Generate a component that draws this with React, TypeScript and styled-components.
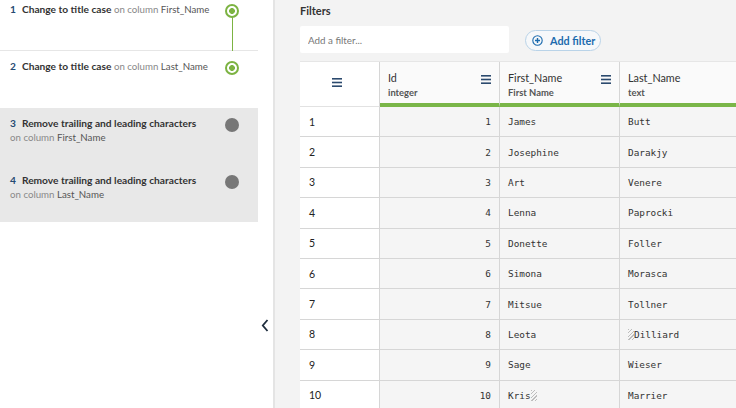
import React from "react";
import styled, { createGlobalStyle, css } from "styled-components";

const GlobalStyle = createGlobalStyle`
  html, body { margin: 0; padding: 0; }
  body { font-family: "Lato", "Noto Sans", sans-serif; color: #333; }
`;

const Page = styled.div`
  display: flex;
  width: 736px;
  height: 408px;
  overflow: hidden;
  background: #f3f3f3;
`;

const LeftPanel = styled.aside`
  position: relative;
  width: 273px;
  flex: none;
  background: #fff;
  border-right: 2px solid #e4e4e4;
`;

const StepList = styled.ol`
  list-style: none;
  margin: -6px 0 0;
  padding: 0;
  width: 258px;
`;

const Step = styled.li<{ $muted?: boolean; $divider?: boolean; $link?: boolean }>`
  position: relative;
  display: flex;
  align-items: flex-start;
  box-sizing: border-box;
  height: 57px;
  padding: 9px 19px 0 10px;
  background: ${(p) => (p.$muted ? "#e8e8e8" : "#fff")};
  border-bottom: ${(p) => (p.$divider ? "1px solid #e6e6e6" : "none")};
  ${(p) =>
    p.$link &&
    css`
      &::after {
        content: "";
        position: absolute;
        left: 231.5px;
        top: 20px;
        width: 1.5px;
        height: 52px;
        background: #7cb342;
      }
    `}
`;

const StepText = styled.div`
  flex: 1;
  min-width: 0;
  font-size: 9.7px;
  line-height: 13px;
`;

const StepHead = styled.div`
  display: flex;
  align-items: baseline;
  gap: 6px;
  white-space: nowrap;
`;

const StepNum = styled.span`
  font-size: 10.2px;
  font-weight: 700;
  color: #264a73;
`;

const StepTitle = styled.span`
  font-size: 10.2px;
  font-weight: 700;
  color: #333;
`;

const OnCol = styled.span`
  font-weight: 400;
  color: #888;
`;

const ColName = styled.span`
  font-weight: 400;
  color: #555;
`;

const StepSub = styled.div`
  margin-top: 1px;
  white-space: nowrap;
`;

const Dot = styled.span<{ $done?: boolean }>`
  position: relative;
  z-index: 1;
  flex: none;
  margin-top: 1px;
  width: 14px;
  height: 14px;
  box-sizing: border-box;
  border-radius: 50%;
  ${(p) =>
    p.$done
      ? css`
          border: 2px solid #7cb342;
          background: radial-gradient(circle, #7cb342 0 2.6px, #fff 3.2px);
        `
      : css`
          background: #777;
        `}
`;

const Collapse = styled.button`
  position: absolute;
  left: 259px;
  top: 317px;
  width: 12px;
  height: 16px;
  padding: 0;
  border: none;
  background: transparent;
  display: flex;
  align-items: center;
  justify-content: center;
`;

const RightPanel = styled.main`
  flex: 1;
  min-width: 0;
  padding: 4px 0 0 25px;
`;

const FiltersLabel = styled.div`
  font-size: 11px;
  font-weight: 700;
  line-height: 14px;
  color: #333;
`;

const FilterBar = styled.div`
  display: flex;
  align-items: center;
  gap: 16px;
  margin-top: 8px;
`;

const FilterInput = styled.input`
  box-sizing: border-box;
  width: 209px;
  height: 27px;
  border: none;
  border-radius: 2px;
  background: #fff;
  padding: 0 8px;
  font-family: "Lato", "Noto Sans", sans-serif;
  font-size: 9.8px;
  color: #333;
  outline: none;
  &::placeholder { color: #777; }
`;

const AddButton = styled.button`
  display: flex;
  align-items: center;
  gap: 7px;
  box-sizing: border-box;
  width: 76px;
  height: 21px;
  padding: 0 0 0 6px;
  border: 1px solid #b9d3e8;
  border-radius: 11px;
  background: #f6f8fa;
  color: #1c6bae;
  font-family: "Lato", "Noto Sans", sans-serif;
  font-size: 10.8px;
  font-weight: 700;
  white-space: nowrap;
  margin-top: 1px;
`;

const Table = styled.div`
  display: grid;
  grid-template-columns: 80px 120px 120px 140px;
  grid-auto-rows: 30.4px;
  grid-template-rows: 45px;
  margin-top: 8px;
  border-top: 1px solid #e6e6e6;
`;

const HeadCorner = styled.div`
  background: #fff;
  border-right: 1px solid #d6d6d6;
  border-bottom: 1px solid #e2e2e2;
  display: flex;
  align-items: center;
  justify-content: center;
  padding: 0 6px 3px 0;
  box-sizing: border-box;
`;

const HeadCell = styled.div`
  box-sizing: border-box;
  background: #fafafa;
  border-right: 1px solid #d6d6d6;
  border-bottom: 4px solid #7ab648;
  padding: 8px 8px 0;
  display: flex;
  justify-content: space-between;
  align-items: flex-start;
`;

const HeadText = styled.div`
  display: flex;
  flex-direction: column;
`;

const HeadName = styled.span`
  font-size: 10.8px;
  line-height: 16px;
  color: #333;
`;

const HeadType = styled.span`
  font-size: 9.4px;
  font-weight: 700;
  line-height: 14px;
  color: #555;
`;

const MenuIcon = styled.span`
  display: flex;
  margin-top: 5px;
`;

const Cell = styled.div<{ $kind: "index" | "num" | "text" }>`
  box-sizing: border-box;
  display: flex;
  align-items: center;
  border-right: 1px solid #d6d6d6;
  border-bottom: 1px solid #d6d6d6;
  white-space: nowrap;
  ${(p) =>
    p.$kind === "index"
      ? css`
          background: #fff;
          padding-left: 9px;
          font-size: 10.5px;
          color: #222;
        `
      : css`
          background: #f5f5f5;
          font-family: "DejaVu Sans Mono", "Liberation Mono", monospace;
          font-size: 9.4px;
          color: #333;
          padding: 0 8px;
          justify-content: ${p.$kind === "num" ? "flex-end" : "flex-start"};
        `}
`;

const Space = styled.span`
  display: inline-block;
  width: 6px;
  height: 11px;
  background: repeating-linear-gradient(135deg, #bdbdbd 0 1px, transparent 1px 2.5px);
`;

const Hamburger = () => (
  <svg width="10" height="9" viewBox="0 0 10 9">
    <rect x="0" y="0" width="10" height="1.6" fill="#2b4a6e" />
    <rect x="0" y="3.7" width="10" height="1.6" fill="#2b4a6e" />
    <rect x="0" y="7.4" width="10" height="1.6" fill="#2b4a6e" />
  </svg>
);

const PlusCircle = () => (
  <svg width="11" height="11" viewBox="0 0 11 11">
    <circle cx="5.5" cy="5.5" r="4.7" fill="none" stroke="#1c6bae" strokeWidth="1.1" />
    <path d="M5.5 3v5M3 5.5h5" stroke="#1c6bae" strokeWidth="1.4" />
  </svg>
);

const Chevron = () => (
  <svg width="8" height="13" viewBox="0 0 8 13">
    <path d="M6.5 1L1.8 6.5L6.5 12" fill="none" stroke="#1e2d3d" strokeWidth="1.8" />
  </svg>
);

type Row = { id: number; first: string; last: string; firstTrail?: boolean; lastLead?: boolean };

const rows: Row[] = [
  { id: 1, first: "James", last: "Butt" },
  { id: 2, first: "Josephine", last: "Darakjy" },
  { id: 3, first: "Art", last: "Venere" },
  { id: 4, first: "Lenna", last: "Paprocki" },
  { id: 5, first: "Donette", last: "Foller" },
  { id: 6, first: "Simona", last: "Morasca" },
  { id: 7, first: "Mitsue", last: "Tollner" },
  { id: 8, first: "Leota", last: "Dilliard", lastLead: true },
  { id: 9, first: "Sage", last: "Wieser" },
  { id: 10, first: "Kris", last: "Marrier", firstTrail: true },
];

const columns = [
  { name: "Id", type: "integer" },
  { name: "First_Name", type: "First Name" },
  { name: "Last_Name", type: "text" },
];

type StepData = { n: number; title: string; col: string; done: boolean };

const steps: StepData[] = [
  { n: 1, title: "Change to title case", col: "First_Name", done: true },
  { n: 2, title: "Change to title case", col: "Last_Name", done: true },
  { n: 3, title: "Remove trailing and leading characters", col: "First_Name", done: false },
  { n: 4, title: "Remove trailing and leading characters", col: "Last_Name", done: false },
];

export default function App() {
  return (
    <>
      <GlobalStyle />
      <Page>
        <LeftPanel>
          <StepList>
            {steps.map((s, i) => (
              <Step key={s.n} $muted={!s.done} $divider={i === 0} $link={i === 0}>
                <StepText>
                  <StepHead>
                    <StepNum>{s.n}</StepNum>
                    {s.done ? (
                      <span>
                        <StepTitle>{s.title}</StepTitle> <OnCol>on column</OnCol>{" "}
                        <ColName>{s.col}</ColName>
                      </span>
                    ) : (
                      <StepTitle>{s.title}</StepTitle>
                    )}
                  </StepHead>
                  {!s.done && (
                    <StepSub>
                      <OnCol>on column</OnCol> <ColName>{s.col}</ColName>
                    </StepSub>
                  )}
                </StepText>
                <Dot $done={s.done} />
              </Step>
            ))}
          </StepList>
          <Collapse aria-label="Collapse">
            <Chevron />
          </Collapse>
        </LeftPanel>
        <RightPanel>
          <FiltersLabel>Filters</FiltersLabel>
          <FilterBar>
            <FilterInput placeholder="Add a filter..." />
            <AddButton>
              <PlusCircle />
              Add filter
            </AddButton>
          </FilterBar>
          <Table>
            <HeadCorner>
              <Hamburger />
            </HeadCorner>
            {columns.map((c) => (
              <HeadCell key={c.name}>
                <HeadText>
                  <HeadName>{c.name}</HeadName>
                  <HeadType>{c.type}</HeadType>
                </HeadText>
                <MenuIcon>
                  <Hamburger />
                </MenuIcon>
              </HeadCell>
            ))}
            {rows.map((r) => (
              <React.Fragment key={r.id}>
                <Cell $kind="index">{r.id}</Cell>
                <Cell $kind="num">{r.id}</Cell>
                <Cell $kind="text">
                  {r.first}
                  {r.firstTrail && <Space />}
                </Cell>
                <Cell $kind="text">
                  {r.lastLead && <Space />}
                  {r.last}
                </Cell>
              </React.Fragment>
            ))}
          </Table>
        </RightPanel>
      </Page>
    </>
  );
}
